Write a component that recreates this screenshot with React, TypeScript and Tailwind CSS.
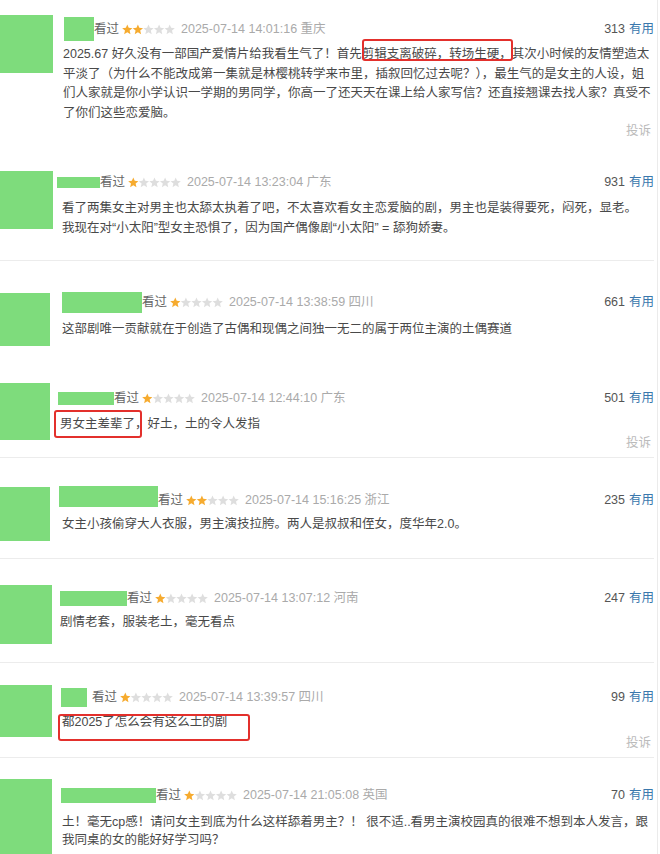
import React from "react";

type Item = {
  wrap: string;
  avatar: string;
  content: string;
  header: string;
  name: string;
  stars: number;
  date: string;
  count: string;
  text: string;
  lines: React.ReactNode[];
  box?: string;
  complaint?: string;
};

const ITEMS: Item[] = [
  {
    wrap: "h-[150px]",
    avatar: "mt-[15px] w-[53px] h-[58px]",
    content: "ml-[10px] pt-[17px]",
    header: "h-[24px]",
    name: "ml-[1px] w-[30px] h-[24px]",
    stars: 2,
    date: "2025-07-14 14:01:16 重庆",
    count: "313",
    text: "mt-[4px] leading-[19.5px]",
    lines: [
      "2025.67 好久没有一部国产爱情片给我看生气了！首先剪辑支离破碎，转场生硬，其次小时候的友情塑造太",
      "平淡了（为什么不能改成第一集就是林樱桃转学来市里，插叙回忆过去呢？），最生气的是女主的人设，姐",
      "们人家就是你小学认识一学期的男同学，你高一了还天天在课上给人家写信？还直接翘课去找人家？真受不",
      "了你们这些恋爱脑。",
    ],
    box: "left-[299px] top-[-6px] w-[151px] h-[22px]",
    complaint: "mt-0",
  },
  {
    wrap: "h-[111px] border-b border-[#ececec]",
    avatar: "mt-[21px] w-[53px] h-[58px]",
    content: "ml-[9px] pt-[22px]",
    header: "h-[20px]",
    name: "-ml-[5px] w-[43px] h-[11px]",
    stars: 1,
    date: "2025-07-14 13:23:04 广东",
    count: "931",
    text: "mt-[6px] leading-[20px]",
    lines: [
      "看了两集女主对男主也太舔太执着了吧，不太喜欢看女主恋爱脑的剧，男主也是装得要死，闷死，显老。",
      "我现在对“小太阳”型女主恐惧了，因为国产偶像剧“小太阳” = 舔狗娇妻。",
    ],
  },
  {
    wrap: "h-[104px]",
    avatar: "mt-[32px] w-[50px] h-[53px]",
    content: "ml-[12px] pt-[31px]",
    header: "h-[21px]",
    name: "w-[80px] h-[21px]",
    stars: 1,
    date: "2025-07-14 13:38:59 四川",
    count: "661",
    text: "mt-[7px] leading-[19.5px]",
    lines: ["这部剧唯一贡献就在于创造了古偶和现偶之间独一无二的属于两位主演的土偶赛道"],
  },
  {
    wrap: "h-[93px] border-b border-[#ececec]",
    avatar: "mt-[18px] w-[50px] h-[57px]",
    content: "ml-[10px] pt-[23px]",
    header: "h-[20px]",
    name: "-ml-[2px] w-[56px] h-[13px]",
    stars: 1,
    date: "2025-07-14 12:44:10 广东",
    count: "501",
    text: "mt-[7px] leading-[19.5px]",
    lines: ["男女主差辈了，好土，土的令人发指"],
    box: "left-[-6px] top-[-5px] w-[88px] h-[28px]",
    complaint: "mt-0",
  },
  {
    wrap: "h-[101px] border-b border-[#ececec]",
    avatar: "mt-[29px] w-[50px] h-[54px]",
    content: "ml-[12px] pt-[28px]",
    header: "h-[28px]",
    name: "-ml-[3px] w-[99px] h-[21px] self-start",
    stars: 2,
    date: "2025-07-14 15:16:25 浙江",
    count: "235",
    text: "mt-[1px] leading-[19.5px]",
    lines: ["女主小孩偷穿大人衣服，男主演技拉胯。两人是叔叔和侄女，度华年2.0。"],
  },
  {
    wrap: "h-[104px] border-b border-[#ececec]",
    avatar: "mt-[26px] w-[52px] h-[59px]",
    content: "ml-[8px] pt-[29px]",
    header: "h-[20px]",
    name: "w-[67px] h-[15px]",
    stars: 1,
    date: "2025-07-14 13:07:12 河南",
    count: "247",
    text: "mt-[5px] leading-[19.5px]",
    lines: ["剧情老套，服装老土，毫无看点"],
  },
  {
    wrap: "h-[95px] border-b border-[#ececec]",
    avatar: "mt-[22px] w-[52px] h-[52px]",
    content: "ml-[10px] pt-[24px]",
    header: "h-[20px]",
    name: "-ml-[1px] mr-[5px] w-[26px] h-[19px]",
    stars: 1,
    date: "2025-07-14 13:39:57 四川",
    count: "99",
    text: "mt-[6px] leading-[19.5px]",
    lines: ["都2025了怎么会有这么土的剧"],
    box: "left-[-4px] top-[1px] w-[192px] h-[27px]",
    complaint: "mt-[2px]",
  },
  {
    wrap: "h-[96px]",
    avatar: "mt-[21px] w-[52px] h-[80px]",
    content: "ml-[10px] pt-[27px]",
    header: "h-[20px]",
    name: "-ml-[1px] w-[95px] h-[15px]",
    stars: 1,
    date: "2025-07-14 21:05:08 英国",
    count: "70",
    text: "mt-[8px] leading-[18px]",
    lines: [
      "土！毫无cp感！请问女主到底为什么这样舔着男主？！ 很不适..看男主演校园真的很难不想到本人发言，跟",
      "我同桌的女的能好好学习吗？",
    ],
  },
];

function starPoints(cx: number, cy: number, r: number) {
  const pts: string[] = [];
  for (let i = 0; i < 10; i++) {
    const rad = i % 2 === 0 ? r : r * 0.45;
    const a = -Math.PI / 2 + (i * Math.PI) / 5;
    pts.push(`${(cx + rad * Math.cos(a)).toFixed(2)},${(cy + rad * Math.sin(a)).toFixed(2)}`);
  }
  return pts.join(" ");
}

const Stars = ({ n }: { n: number }) => (
  <svg width="53" height="11" viewBox="0 0 53 11" className="ml-[3px] shrink-0">
    {[0, 1, 2, 3, 4].map((i) => (
      <polygon key={i} points={starPoints(5.3 + i * 10.6, 5.8, 5.4)} fill={i < n ? "#f6ab2f" : "#dedede"} />
    ))}
  </svg>
);

const Comment = ({ item }: { item: Item }) => (
  <div className={`mr-[3px] flex items-start ${item.wrap}`}>
    <div className={`shrink-0 bg-[#7edc7c] ${item.avatar}`} />
    <div className={`flex min-w-0 flex-1 flex-col ${item.content}`}>
      <div className={`flex items-center text-[12.5px] ${item.header}`}>
        <div className={`shrink-0 bg-[#7edc7c] ${item.name}`} />
        <span className="text-[#666]">看过</span>
        <Stars n={item.stars} />
        <span className="ml-[6px] text-[#aaa]">{item.date}</span>
        <span className="ml-auto text-[#555]">{item.count}</span>
        <span className="ml-[4px] text-[#3a78ad]">有用</span>
      </div>
      <div className={`relative whitespace-nowrap text-[12.5px] text-[#494949] ${item.text}`}>
        {item.lines.map((l, i) => (
          <div key={i}>{l}</div>
        ))}
        {item.box && (
          <div className={`absolute rounded-[3px] border-2 border-[#e3302c] ${item.box}`} />
        )}
      </div>
      {item.complaint && (
        <div className={`self-end pr-[3px] text-[12.5px] leading-[16px] text-[#bbb] ${item.complaint}`}>投诉</div>
      )}
    </div>
  </div>
);

export default function App() {
  return (
    <div className="h-[854px] w-[660px] overflow-hidden bg-white font-['Liberation_Sans','Noto_Sans_CJK_SC',sans-serif]">
      <div className="w-[658px] border-r border-[#ebebeb]">
        {ITEMS.map((it, i) => (
          <Comment key={i} item={it} />
        ))}
      </div>
    </div>
  );
}
